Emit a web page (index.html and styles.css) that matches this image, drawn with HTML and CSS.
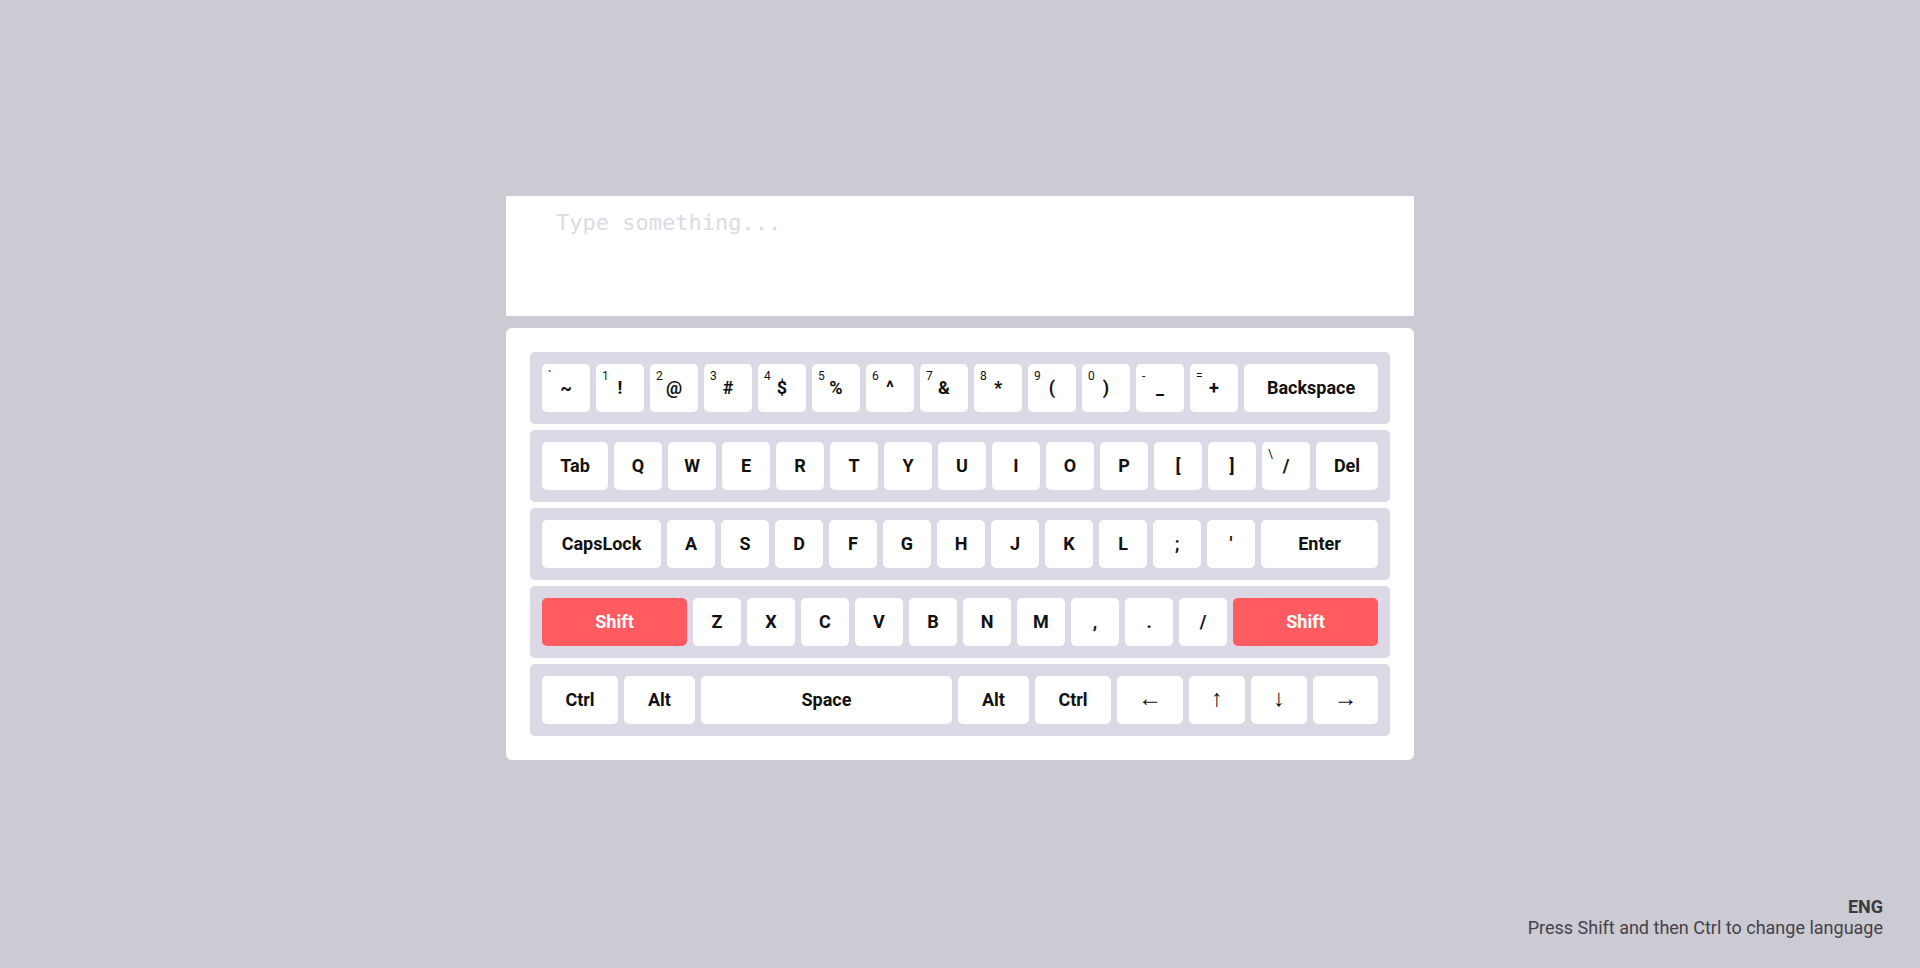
FILE: index.html
```html
<!DOCTYPE html>
<html lang="en">
<head>
<meta charset="utf-8">
<title>Virtual Keyboard</title>
<link rel="stylesheet" href="styles.css">
</head>
<body>
<main class="app">
  <textarea class="input" placeholder="Type something..."></textarea>
  <div class="keyboard">
    <div class="row">
      <div class="key"><span class="alt">`</span>~</div>
      <div class="key"><span class="alt">1</span>!</div>
      <div class="key"><span class="alt">2</span>@</div>
      <div class="key"><span class="alt">3</span>#</div>
      <div class="key"><span class="alt">4</span>$</div>
      <div class="key"><span class="alt">5</span>%</div>
      <div class="key"><span class="alt">6</span>^</div>
      <div class="key"><span class="alt">7</span>&amp;</div>
      <div class="key"><span class="alt">8</span>*</div>
      <div class="key"><span class="alt">9</span>(</div>
      <div class="key"><span class="alt">0</span>)</div>
      <div class="key"><span class="alt">-</span>_</div>
      <div class="key"><span class="alt">=</span>+</div>
      <div class="key key--fill">Backspace</div>
    </div>
    <div class="row">
      <div class="key key--tab">Tab</div>
      <div class="key">Q</div>
      <div class="key">W</div>
      <div class="key">E</div>
      <div class="key">R</div>
      <div class="key">T</div>
      <div class="key">Y</div>
      <div class="key">U</div>
      <div class="key">I</div>
      <div class="key">O</div>
      <div class="key">P</div>
      <div class="key">[</div>
      <div class="key">]</div>
      <div class="key"><span class="alt">\</span>/</div>
      <div class="key key--fill">Del</div>
    </div>
    <div class="row">
      <div class="key key--caps">CapsLock</div>
      <div class="key">A</div>
      <div class="key">S</div>
      <div class="key">D</div>
      <div class="key">F</div>
      <div class="key">G</div>
      <div class="key">H</div>
      <div class="key">J</div>
      <div class="key">K</div>
      <div class="key">L</div>
      <div class="key">;</div>
      <div class="key">'</div>
      <div class="key key--fill">Enter</div>
    </div>
    <div class="row">
      <div class="key key--shift">Shift</div>
      <div class="key">Z</div>
      <div class="key">X</div>
      <div class="key">C</div>
      <div class="key">V</div>
      <div class="key">B</div>
      <div class="key">N</div>
      <div class="key">M</div>
      <div class="key">,</div>
      <div class="key">.</div>
      <div class="key">/</div>
      <div class="key key--shift key--fill">Shift</div>
    </div>
    <div class="row">
      <div class="key key--ctrl">Ctrl</div>
      <div class="key key--alt">Alt</div>
      <div class="key key--fill">Space</div>
      <div class="key key--alt">Alt</div>
      <div class="key key--ctrl">Ctrl</div>
      <div class="key key--arrow key--left">&larr;</div>
      <div class="key key--arrow key--up">&uarr;</div>
      <div class="key key--arrow key--down">&darr;</div>
      <div class="key key--arrow key--right">&rarr;</div>
    </div>
  </div>
</main>
<footer class="lang">
  <div class="lang__name">ENG</div>
  <div class="lang__hint">Press Shift and then Ctrl to change language</div>
</footer>
</body>
</html>
```
FILE: styles.css
```css
* { box-sizing: border-box; }

html, body { height: 100%; }

body {
  margin: 0;
  background: #cccad3;
  font-family: Roboto, "Liberation Sans", sans-serif;
  display: flex;
  flex-direction: column;
  min-height: 100vh;
}

.app {
  width: 908px;
  margin: 196px auto 0;
  display: flex;
  flex-direction: column;
  gap: 12px;
}

.input {
  display: block;
  width: 100%;
  height: 120px;
  margin: 0;
  border: none;
  border-radius: 0;
  outline: none;
  resize: none;
  background: #ffffff;
  padding: 14px 50px;
  font-family: "DejaVu Sans Mono", "Liberation Mono", monospace;
  font-size: 22px;
  color: #333;
}

.input::placeholder { color: #dcdae2; }

.keyboard {
  background: #ffffff;
  border-radius: 6px;
  padding: 24px;
  display: flex;
  flex-direction: column;
  gap: 6px;
}

.row {
  display: flex;
  gap: 6px;
  padding: 12px;
  background: #ddd8e5;
  border-radius: 5px;
}

.key {
  position: relative;
  flex: 0 0 48px;
  height: 48px;
  padding-bottom: 1px;
  background: #ffffff;
  border-radius: 5px;
  display: flex;
  align-items: center;
  justify-content: center;
  font-size: 18px;
  font-weight: 700;
  color: #111;
  white-space: nowrap;
}

.alt {
  position: absolute;
  left: 6px;
  top: 5px;
  font-size: 12px;
  font-weight: 400;
  line-height: 14px;
}

.key--fill { flex: 1 1 0; }
.key--tab { flex-basis: 66px; }
.key--caps { flex-basis: 119px; }
.key--shift {
  flex-basis: 145px;
  background: #ff5b61;
  color: #ffffff;
}
.key--ctrl { flex-basis: 76px; }
.key--alt { flex-basis: 71px; }
.key--arrow {
  font-weight: 400;
  font-size: 24px;
  padding-bottom: 4px;
}
.key--left { flex-basis: 66px; }
.key--up { flex-basis: 56px; }
.key--down { flex-basis: 56px; }
.key--right { flex-basis: 65px; }

.lang {
  margin-top: auto;
  padding: 0 37px 30px;
  text-align: right;
  font-size: 18px;
  line-height: 21px;
  color: #444249;
}

.lang__name {
  font-weight: 700;
  color: #3a3a3f;
}
```
